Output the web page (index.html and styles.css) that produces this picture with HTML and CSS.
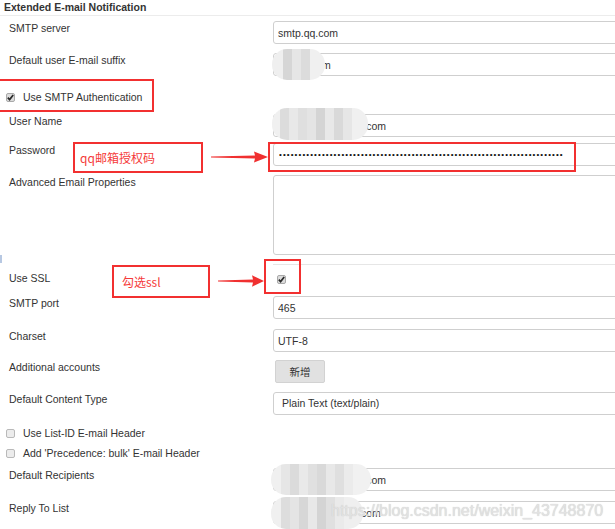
FILE: index.html
```html
<!DOCTYPE html>
<html lang="zh">
<head>
<meta charset="UTF-8">
<title>Extended E-mail Notification</title>
<link rel="stylesheet" href="styles.css">
</head>
<body>
<div class="page">
    <div class="section-title">Extended E-mail Notification</div>

    <div class="row first">
        <div class="label">SMTP server</div>
        <div class="field"><input class="input" type="text" value="smtp.qq.com" readonly></div>
    </div>

    <div class="row">
        <div class="label">Default user E-mail suffix</div>
        <div class="field"><input class="input" type="text" value="@mail.com" readonly></div>
    </div>

    <div class="check-row after-input">
        <span class="box checked"><svg width="9" height="9" viewBox="0 0 9 9"><path d="M1.8 4.6 L3.6 6.6 L7.2 2" fill="none" stroke="#2a2a2a" stroke-width="1.7"/></svg></span>
        <span>Use SMTP Authentication</span>
    </div>

    <div class="row after-check">
        <div class="label">User Name</div>
        <div class="field"><input class="input" type="text" value="xxxxxxxxxxxx@qq.com" readonly></div>
    </div>

    <div class="row tight">
        <div class="label">Password</div>
        <div class="field"><input class="input pass" type="password" value="aaaaaaaaaaaaaaaaaaaaaaaaaaaaaaaaaaaaaaaaaaaaaaaaaaaaaaaaaaaaaaaaaaaaaaaaa" readonly></div>
    </div>

    <div class="row">
        <div class="label">Advanced Email Properties</div>
        <div class="field"><textarea class="input area" readonly></textarea></div>
    </div>

    <div class="row ssl">
        <div class="label">Use SSL</div>
        <div class="field ssl-field">
            <span class="box checked"><svg width="9" height="9" viewBox="0 0 9 9"><path d="M1.8 4.6 L3.6 6.6 L7.2 2" fill="none" stroke="#2a2a2a" stroke-width="1.7"/></svg></span>
        </div>
    </div>

    <div class="row near">
        <div class="label">SMTP port</div>
        <div class="field"><input class="input" type="text" value="465" readonly></div>
    </div>

    <div class="row wide">
        <div class="label">Charset</div>
        <div class="field"><input class="input" type="text" value="UTF-8" readonly></div>
    </div>

    <div class="row near">
        <div class="label">Additional accounts</div>
        <div class="field"><button class="btn">新增</button></div>
    </div>

    <div class="row">
        <div class="label">Default Content Type</div>
        <div class="field"><div class="input select">Plain Text (text/plain)</div></div>
    </div>

    <div class="check-row after-select">
        <span class="box"></span>
        <span>Use List-ID E-mail Header</span>
    </div>
    <div class="check-row next-check">
        <span class="box"></span>
        <span>Add 'Precedence: bulk' E-mail Header</span>
    </div>

    <div class="row near">
        <div class="label">Default Recipients</div>
        <div class="field"><input class="input" type="text" value="xxxxxxxxxxxx@qq.com" readonly></div>
    </div>

    <div class="row wide">
        <div class="label">Reply To List</div>
        <div class="field"><input class="input" type="text" value="xxxxxxxxxxx@qq.com" readonly></div>
    </div>

    <!-- blurred values -->
    <div class="blur blur-suffix"></div>
    <div class="blur blur-user"></div>
    <div class="blur blur-rcpt"></div>
    <div class="blur blur-reply"></div>

    <!-- annotations -->
    <div class="mark-blue"></div>
    <div class="note-box auth-box"></div>
    <div class="note-box pass-box"></div>
    <div class="note-box note qq-note">qq邮箱授权码</div>
    <svg class="arrow arrow-pass" width="62" height="14" viewBox="0 0 62 14"><polygon points="3,6.4 47,5.4 46,1.5 60,7 46,12.5 47,8.6 3,7.6" fill="#f03030"/></svg>
    <div class="note-box note ssl-note">勾选ssl</div>
    <svg class="arrow arrow-ssl" width="50" height="14" viewBox="0 0 50 14"><polygon points="2,6.4 37,5.4 36,1.2 48,7 36,12.8 37,8.6 2,7.6" fill="#f03030"/></svg>
    <div class="note-box ssl-box"></div>

    <div class="watermark">https://blog.csdn.net/weixin_43748870</div>
</div>
</body>
</html>
```

FILE: styles.css
```css
html, body {
    margin: 0;
    overflow: hidden;
}
body {
    font-family: "Liberation Sans", Arial, sans-serif;
    font-size: 10.5px;
    color: #333;
    background-color: #fff;
}
.page {
    position: relative;
    width: 615px;
    height: 529px;
    overflow: hidden;
}
.section-title {
    font-weight: bold;
    line-height: 13px;
    padding: 1px 4px;
    border-bottom: 1px solid #ececec;
}
.row {
    display: grid;
    grid-template-columns: 273px 400px;
    margin-top: 9px;
}
.row.first { margin-top: 5px; }
.row.wide { margin-top: 10px; }
.row.near { margin-top: 8px; }
.row.tight { margin-top: 6px; }
.row.after-check { margin-top: 10px; }
.label {
    padding: 1px 0 0 9px;
    line-height: 13px;
}
.input {
    box-sizing: border-box;
    display: block;
    width: 400px;
    height: 23px;
    margin: 0;
    padding: 0 4px;
    border: 1px solid #cfcfcf;
    border-radius: 3px;
    background-color: #fff;
    font: inherit;
    color: #333;
    outline: none;
}
.pass {
    padding-left: 5px;
    font-size: 8px;
    letter-spacing: 1.1px;
    color: #111;
}
.area {
    height: 80px;
    resize: none;
}
.select {
    line-height: 21px;
    padding-left: 8px;
}
.ssl {
    height: 24px;
}
.row.ssl .label {
    padding-top: 8px;
}
.ssl-field {
    border-top: 1px solid #e6e6e6;
    padding: 9px 0 0 4px;
}
.btn {
    margin-left: 2px;
    width: 50px;
    height: 23px;
    border: 1px solid #d2d2d2;
    border-radius: 2px;
    background-color: #e1e1e1;
    font-family: "Noto Sans CJK SC", sans-serif;
    font-size: 10.5px;
    color: #333;
    padding: 0;
}
.check-row {
    display: flex;
    align-items: center;
    height: 13px;
    line-height: 13px;
    padding-left: 6px;
}
.check-row.after-input { margin-top: 15px; }
.check-row.after-select { margin-top: 12px; }
.check-row.next-check { margin-top: 7px; }
.box {
    box-sizing: border-box;
    display: inline-block;
    width: 9px;
    height: 9px;
    margin-right: 8px;
    border: 1px solid #b9b9b9;
    border-radius: 2px;
    background-color: #ececec;
    position: relative;
}
.box.checked {
    background-color: #dcdcdc;
    border-color: #a9a9a9;
}
.box svg {
    position: absolute;
    left: -1px;
    top: -1px;
}

/* blurred personal data */
.blur {
    position: absolute;
    border-radius: 15px;
}
.blur-suffix {
    left: 272px;
    top: 49px;
    width: 53px;
    height: 31px;
    background: linear-gradient(90deg, #efefef 0 11px, #d6d6d6 11px 20px, #e6e6e6 20px 29px, #dcdcdc 29px 38px, #f0f0f0 38px);
}
.blur-user {
    left: 272px;
    top: 108px;
    width: 96px;
    height: 32px;
    background: linear-gradient(90deg, #f0f0f0 0 8px, #dcdcdc 8px 17px, #e8e8e8 17px 26px, #dfdfdf 26px 35px, #e4e4e4 35px 44px, #d4d4d4 44px 53px, #e8e8e8 53px 62px, #d9d9d9 62px 71px, #e6e6e6 71px 80px, #f0f0f0 80px);
}
.blur-rcpt {
    left: 271px;
    top: 464px;
    width: 100px;
    height: 31px;
    background: linear-gradient(90deg, #f0f0f0 0 10px, #e6e6e6 10px 19px, #dbdbdb 19px 28px, #e9e9e9 28px 37px, #e0e0e0 37px 46px, #d9d9d9 46px 55px, #e8e8e8 55px 64px, #dfdfdf 64px 73px, #ebebeb 73px 82px, #f1f1f1 82px);
}
.blur-reply {
    left: 271px;
    top: 497px;
    width: 92px;
    height: 32px;
    background: linear-gradient(90deg, #f0f0f0 0 10px, #dddddd 10px 19px, #e4e4e4 19px 28px, #d7d7d7 28px 37px, #e8e8e8 37px 46px, #d4d4d4 46px 55px, #e0e0e0 55px 64px, #eaeaea 64px 73px, #efefef 73px);
}

/* red annotations */
.mark-blue {
    position: absolute;
    left: 0;
    top: 255px;
    width: 2px;
    height: 8px;
    background-color: #b7c8e2;
}
.note-box {
    position: absolute;
    box-sizing: border-box;
    border: 2px solid #f23030;
}
.note {
    display: flex;
    align-items: center;
    font-family: "Noto Sans CJK SC", sans-serif;
    font-size: 12px;
    color: #f53a3a;
}
.auth-box {
    left: -3px;
    top: 79px;
    width: 157px;
    height: 33px;
}
.pass-box {
    left: 268px;
    top: 142px;
    width: 308px;
    height: 30px;
}
.qq-note {
    left: 73px;
    top: 142px;
    width: 130px;
    height: 31px;
    padding-left: 5px;
}
.ssl-note {
    left: 112px;
    top: 265px;
    width: 98px;
    height: 33px;
    padding-left: 8px;
}
.ssl-box {
    left: 264px;
    top: 259px;
    width: 37px;
    height: 35px;
}
.arrow {
    position: absolute;
}
.arrow-pass {
    left: 208px;
    top: 150px;
}
.arrow-ssl {
    left: 216px;
    top: 274px;
}
.watermark {
    position: absolute;
    left: 331px;
    top: 503px;
    font-family: "Liberation Sans", Arial, sans-serif;
    font-size: 16px;
    line-height: 16px;
    color: #e2e2e2;
    text-shadow: 0 0 1px #c4c4c4;
    white-space: nowrap;
}
```
